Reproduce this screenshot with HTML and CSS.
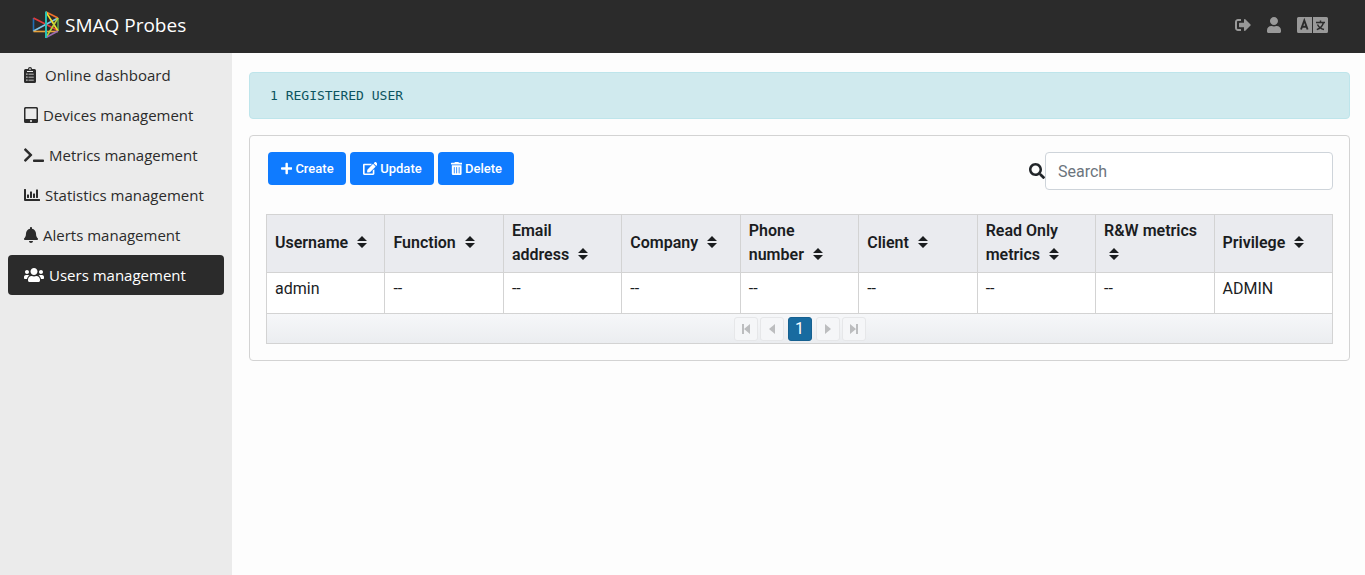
FILE: index.html
```html
<!DOCTYPE html>
<html lang="en">
<head>
<meta charset="utf-8">
<title>SMAQ Probes - Users management</title>
<link rel="stylesheet" href="styles.css">
</head>
<body>
<header class="topbar">
  <a class="brand" href="#">
    <svg class="logo" viewBox="0 0 28 28" fill="none" stroke-width="1.6" aria-hidden="true">
      <path d="M1.500 7V20.500" stroke="#1f6fb5"/>
      <path d="M1.500 7L26 19.500" stroke="#e23b3b"/>
      <path d="M1.500 20L26 7" stroke="#7cc4ea"/>
      <path d="M1.500 20.500H26" stroke="#e9a23b"/>
      <path d="M26 7V20" stroke="#5da548"/>
      <path d="M14 1L26 7" stroke="#f0702a"/>
      <path d="M14 1L26 20" stroke="#f2df2e"/>
      <path d="M14 26.500L26 7" stroke="#b9cf3a"/>
      <path d="M14 26.500L26 20" stroke="#9a6bb0"/>
      <path d="M14 .5V27" stroke="#27c0b4" stroke-width="2"/>
    </svg>
    <span>SMAQ Probes</span>
  </a>
  <nav class="tools" aria-label="Account">
    <button class="tool" aria-label="Log out"><svg class="ico" viewBox="0 0 512 512"><path d="M497 273L329 441c-15 15-41 4.500-41-17v-96H152c-13.300 0-24-10.700-24-24v-96c0-13.300 10.700-24 24-24h136V88c0-21.400 25.900-32 41-17l168 168c9.300 9.400 9.300 24.600 0 34zM192 436v-40c0-6.600-5.400-12-12-12H96c-17.700 0-32-14.300-32-32V160c0-17.700 14.300-32 32-32h84c6.600 0 12-5.400 12-12V76c0-6.600-5.400-12-12-12H96c-53 0-96 43-96 96v192c0 53 43 96 96 96h84c6.600 0 12-5.400 12-12z"/></svg></button>
    <button class="tool" aria-label="Profile"><svg class="ico" viewBox="0 0 448 512"><path d="M224 256c70.700 0 128-57.300 128-128S294.700 0 224 0 96 57.300 96 128s57.300 128 128 128zm89.600 32h-16.700c-22.200 10.200-46.900 16-72.900 16s-50.600-5.800-72.900-16h-16.700C60.200 288 0 348.200 0 422.400V464c0 26.500 21.500 48 48 48h352c26.500 0 48-21.500 48-48v-41.600c0-74.200-60.200-134.400-134.400-134.400z"/></svg></button>
    <button class="tool" aria-label="Language"><svg class="lang" viewBox="0 0 31 16" fill="none"><path d="M1.500 0H15V16H1.500Q0 16 0 14.500V1.500Q0 0 1.500 0zM16 0H29.500Q31 0 31 1.500V14.500Q31 16 29.500 16H16z" fill="#999"/><path d="M4 12.500L7.300 3.500L10.600 12.500M5.200 9.800H9.400" stroke="#2b2b2b" stroke-width="1.900"/><path d="M19 5.500H28M23.500 3.500V5.500M26.500 5.500Q25 11 19.800 12.600M20.500 7.500Q22.500 11.500 27 12.600" stroke="#2b2b2b" stroke-width="1.500"/></svg></button>
  </nav>
</header>
<div class="shell">
  <nav class="sidebar" aria-label="Main">
    <a class="item" href="#"><svg class="ico wide-gap" viewBox="0 0 384 512"><path fill-rule="evenodd" d="M48 64h80a64 64 0 0 1 128 0h80a48 48 0 0 1 48 48v352a48 48 0 0 1-48 48H48a48 48 0 0 1-48-48V112a48 48 0 0 1 48-48zM192 40a24 24 0 1 0 .1 0zM96 128v32h192v-32zM72 208v40h40v-40zm72 8v24h168v-24zM72 304v40h40v-40zm72 8v24h168v-24zM72 400v40h40v-40zm72 8v24h168v-24z"/></svg><span>Online dashboard</span></a>
    <a class="item" href="#"><svg class="ico" viewBox="0 0 448 512"><path fill-rule="evenodd" d="M48 0h352a48 48 0 0 1 48 48v416a48 48 0 0 1-48 48H48a48 48 0 0 1-48-48V48A48 48 0 0 1 48 0zM60 48a12 12 0 0 0-12 12v312a12 12 0 0 0 12 12h328a12 12 0 0 0 12-12V60a12 12 0 0 0-12-12zM224 416a32 32 0 1 0 .1 0z"/></svg><span>Devices management</span></a>
    <a class="item" href="#"><svg class="ico" viewBox="0 0 640 512"><path d="M257.900 273L64 467c-9 9-25 9-34 0L7 444c-9-9-9-24 0-34l154-154L7 102c-9-10-9-25 0-34l23-23c9-9 25-9 34 0l194 194c9 9 9 25 0 34zM640 424v32c0 13-11 24-24 24H312c-13 0-24-11-24-24v-32c0-13 11-24 24-24h304c13 0 24 11 24 24z"/></svg><span>Metrics management</span></a>
    <a class="item" href="#"><svg class="ico" viewBox="0 0 512 512"><path d="M0 80a16 16 0 0 1 16-16h32a16 16 0 0 1 16 16v304h432a16 16 0 0 1 16 16v32a16 16 0 0 1-16 16H32a32 32 0 0 1-32-32zM109 237h38a13 13 0 0 1 13 13v89a13 13 0 0 1-13 13h-38a13 13 0 0 1-13-13v-89a13 13 0 0 1 13-13zM205 141h38a13 13 0 0 1 13 13v185a13 13 0 0 1-13 13h-38a13 13 0 0 1-13-13V154a13 13 0 0 1 13-13zM301 205h38a13 13 0 0 1 13 13v121a13 13 0 0 1-13 13h-38a13 13 0 0 1-13-13V218a13 13 0 0 1 13-13zM397 77h38a13 13 0 0 1 13 13v249a13 13 0 0 1-13 13h-38a13 13 0 0 1-13-13V90a13 13 0 0 1 13-13z"/></svg><span>Statistics management</span></a>
    <a class="item" href="#"><svg class="ico" viewBox="0 0 448 512"><path d="M224 512c35.320 0 63.970-28.650 63.970-64H160.030c0 35.350 28.650 64 63.970 64zm215.390-149.710c-19.320-20.760-55.470-51.990-55.470-154.290 0-77.700-54.480-139.900-127.940-155.160V32c0-17.670-14.320-32-31.980-32s-31.980 14.330-31.980 32v20.840C118.560 68.100 64.080 130.300 64.080 208c0 102.300-36.150 133.530-55.470 154.290-6 6.450-8.660 14.160-8.610 21.710.11 16.400 12.980 32 32.100 32h383.800c19.120 0 32-15.600 32.100-32 .05-7.550-2.610-15.270-8.610-21.710z"/></svg><span>Alerts management</span></a>
    <a class="item active" href="#" aria-current="page"><svg class="ico" viewBox="0 0 640 512"><path d="M96 224c35.300 0 64-28.700 64-64s-28.700-64-64-64-64 28.700-64 64 28.700 64 64 64zm448 0c35.300 0 64-28.700 64-64s-28.700-64-64-64-64 28.700-64 64 28.700 64 64 64zm32 32h-64c-17.600 0-33.500 7.100-45.100 18.600 40.300 22.100 68.900 62 75.100 109.400h66c17.700 0 32-14.300 32-32v-32c0-35.300-28.700-64-64-64zm-256 0c61.900 0 112-50.100 112-112S381.900 32 320 32 208 82.100 208 144s50.100 112 112 112zm76.800 32h-8.300c-20.800 10-43.900 16-68.500 16s-47.600-6-68.500-16h-8.300C179.600 288 128 339.600 128 403.200V432c0 26.500 21.500 48 48 48h288c26.500 0 48-21.500 48-48v-28.800c0-63.600-51.600-115.200-115.200-115.200zm-223.700-13.400C161.500 263.100 145.600 256 128 256H64c-35.300 0-64 28.700-64 64v32c0 17.700 14.300 32 32 32h65.900c6.300-47.400 34.900-87.300 75.200-109.400z"/></svg><span>Users management</span></a>
  </nav>
  <main class="content">
    <div class="notice" role="status">1 REGISTERED USER</div>
    <section class="card">
      <div class="actions">
        <div class="buttons">
          <button class="btn"><svg class="ico" viewBox="0 0 448 512"><path d="M416 208H272V64c0-17.670-14.330-32-32-32h-32c-17.670 0-32 14.330-32 32v144H32c-17.670 0-32 14.330-32 32v32c0 17.670 14.330 32 32 32h144v144c0 17.670 14.330 32 32 32h32c17.670 0 32-14.330 32-32V304h144c17.670 0 32-14.330 32-32v-32c0-17.670-14.330-32-32-32z"/></svg>Create</button>
          <button class="btn"><svg class="ico" viewBox="0 0 576 512"><path d="M402.600 83.200l90.200 90.200c3.800 3.800 3.800 10 0 13.800L274.400 405.600l-92.800 10.300c-12.400 1.400-22.900-9.100-21.500-21.500l10.300-92.800L388.800 83.200c3.800-3.800 10-3.800 13.800 0zm162-22.900l-48.800-48.800c-15.200-15.200-39.900-15.200-55.200 0l-35.400 35.400c-3.800 3.800-3.800 10 0 13.800l90.200 90.200c3.800 3.800 10 3.800 13.800 0l35.400-35.400c15.200-15.300 15.200-40 0-55.200zM384 346.200V448H64V128h229.800c3.200 0 6.200-1.300 8.500-3.500l40-40c7.600-7.600 2.200-20.500-8.500-20.500H48C21.500 64 0 85.500 0 112v352c0 26.500 21.500 48 48 48h352c26.500 0 48-21.500 48-48V306.200c0-10.700-12.900-16-20.500-8.500l-40 40c-2.200 2.300-3.500 5.300-3.500 8.500z"/></svg>Update</button>
          <button class="btn"><svg class="ico" viewBox="0 0 448 512"><path fill-rule="evenodd" d="M16 32h120l9-19A24 24 0 0 1 167 0h114a24 24 0 0 1 22 13l9 19h120a16 16 0 0 1 16 16v32a16 16 0 0 1-16 16H16A16 16 0 0 1 0 80V48a16 16 0 0 1 16-16zM32 128h384v336a48 48 0 0 1-48 48H80a48 48 0 0 1-48-48zM128 192a16 16 0 0 0-16 16v224a16 16 0 0 0 32 0V208a16 16 0 0 0-16-16zm96 0a16 16 0 0 0-16 16v224a16 16 0 0 0 32 0V208a16 16 0 0 0-16-16zm96 0a16 16 0 0 0-16 16v224a16 16 0 0 0 32 0V208a16 16 0 0 0-16-16z"/></svg>Delete</button>
        </div>
        <div class="search">
          <label for="search" aria-label="Search"><svg class="ico" viewBox="0 0 512 512"><path d="M505 442.700L405.300 343c-4.500-4.500-10.600-7-17-7H372c27.600-35.300 44-79.700 44-128C416 93.100 322.900 0 208 0S0 93.100 0 208s93.100 208 208 208c48.300 0 92.700-16.400 128-44v16.300c0 6.400 2.500 12.500 7 17l99.700 99.700c9.400 9.400 24.600 9.400 33.900 0l28.300-28.300c9.400-9.400 9.400-24.600.1-34zM208 336c-70.700 0-128-57.200-128-128 0-70.700 57.200-128 128-128 70.700 0 128 57.200 128 128 0 70.700-57.200 128-128 128z"/></svg></label>
          <input id="search" class="field" type="text" placeholder="Search">
        </div>
      </div>
      <table class="grid">
        <thead>
          <tr>
            <th>Username <svg class="sort" viewBox="0 0 10 12"><path d="M5 0L10 5H0zM0 7H10L5 12z"/></svg></th>
            <th>Function <svg class="sort" viewBox="0 0 10 12"><path d="M5 0L10 5H0zM0 7H10L5 12z"/></svg></th>
            <th>Email address <svg class="sort" viewBox="0 0 10 12"><path d="M5 0L10 5H0zM0 7H10L5 12z"/></svg></th>
            <th>Company <svg class="sort" viewBox="0 0 10 12"><path d="M5 0L10 5H0zM0 7H10L5 12z"/></svg></th>
            <th>Phone number <svg class="sort" viewBox="0 0 10 12"><path d="M5 0L10 5H0zM0 7H10L5 12z"/></svg></th>
            <th>Client <svg class="sort" viewBox="0 0 10 12"><path d="M5 0L10 5H0zM0 7H10L5 12z"/></svg></th>
            <th>Read Only metrics <svg class="sort" viewBox="0 0 10 12"><path d="M5 0L10 5H0zM0 7H10L5 12z"/></svg></th>
            <th>R&amp;W metrics <svg class="sort" viewBox="0 0 10 12"><path d="M5 0L10 5H0zM0 7H10L5 12z"/></svg></th>
            <th>Privilege <svg class="sort" viewBox="0 0 10 12"><path d="M5 0L10 5H0zM0 7H10L5 12z"/></svg></th>
          </tr>
        </thead>
        <tbody>
          <tr><td>admin</td><td>--</td><td>--</td><td>--</td><td>--</td><td>--</td><td>--</td><td>--</td><td>ADMIN</td></tr>
        </tbody>
      </table>
      <nav class="pager" aria-label="Pages">
        <button class="page" disabled aria-label="First page"><svg viewBox="0 0 10 10"><path d="M1 0H3V10H1zM9 0V10L3 5z"/></svg></button>
        <button class="page" disabled aria-label="Previous page"><svg viewBox="0 0 10 10"><path d="M8 0V10L2 5z"/></svg></button>
        <button class="page current" aria-current="page">1</button>
        <button class="page" disabled aria-label="Next page"><svg viewBox="0 0 10 10"><path d="M2 0V10L8 5z"/></svg></button>
        <button class="page" disabled aria-label="Last page"><svg viewBox="0 0 10 10"><path d="M7 0H9V10H7zM1 0V10L7 5z"/></svg></button>
      </nav>
    </section>
  </main>
</div>
</body>
</html>
```
FILE: styles.css
```css
* { box-sizing: border-box; }

body {
  margin: 0;
  min-height: 100vh;
  display: flex;
  flex-direction: column;
  background: #fdfdfd;
  color: #212529;
  font: 16px/24px Roboto, sans-serif;
}

button { font-family: inherit; cursor: pointer; }

svg { fill: currentColor; }

.ico { height: 16px; flex: none; }

.topbar {
  display: flex;
  align-items: center;
  justify-content: space-between;
  height: 53px;
  padding: 0 37px 3px 32px;
  background: #2b2b2b;
}

.brand {
  display: flex;
  align-items: center;
  gap: 5px;
  color: #fff;
  font: 19px/28px "Open Sans", sans-serif;
  text-decoration: none;
}

.logo { width: 28px; height: 28px; fill: none; }

.tools { display: flex; align-items: center; gap: 16px; }

.tool {
  display: flex;
  padding: 0;
  border: 0;
  background: none;
  color: #999;
}

.lang { width: 31px; height: 16px; }

.shell { display: flex; flex: 1; }

.sidebar {
  flex: 0 0 232px;
  padding: 2px 8px;
  background: #ebebeb;
}

.item {
  display: flex;
  align-items: center;
  gap: 5px;
  height: 40px;
  padding: 0 16px;
  border-radius: 4px;
  color: #2b2b2b;
  font: 15px/24px "Open Sans", sans-serif;
  text-decoration: none;
}

.item.active { background: #2b2b2b; color: #fff; }

.wide-gap { margin-right: 4px; }

.content { flex: 1; min-width: 0; padding: 19px 15px 16px 17px; }

.notice {
  margin-bottom: 16px;
  padding: 11px 20px;
  border: 1px solid #bee5eb;
  border-radius: 4px;
  background: #d0eaee;
  color: #0c5460;
  font: 13px/23px "DejaVu Sans Mono", monospace;
}

.card {
  padding: 16px;
  border: 1px solid #d3d3d3;
  border-radius: 4px;
}

.actions {
  display: flex;
  justify-content: space-between;
  align-items: flex-start;
  margin-bottom: 24px;
}

.buttons { display: flex; gap: 4px; padding-left: 2px; }

.btn {
  display: flex;
  align-items: center;
  gap: 3px;
  height: 33px;
  padding: 0 12px 0 13px;
  border: 0;
  border-radius: 4px;
  background: #0f7bff;
  color: #fff;
  font-size: 13px;
  font-weight: 500;
}

.btn .ico { height: 13px; }

.search { display: flex; align-items: center; }

.search label { display: flex; }

.field {
  width: 288px;
  height: 38px;
  padding: 0 12px;
  border: 1px solid #ced4da;
  border-radius: 4px;
  background: #fff;
  color: #495057;
  font: inherit;
}

.field::placeholder { color: #6c757d; opacity: 1; }

.grid {
  width: 100%;
  table-layout: fixed;
  border-collapse: collapse;
  color: #1b1d1f;
}

.grid th,
.grid td {
  border: 1px solid #d3d3d3;
  text-align: left;
}

.grid th {
  height: 58px;
  padding: 3px 12px 5px 8px;
  background: #eaebef;
  font-weight: 600;
}

.grid td {
  height: 41px;
  padding: 4px 8px;
  vertical-align: top;
  background: #fff;
}

.sort { width: 10px; height: 12px; margin-left: 5px; }

.pager {
  display: flex;
  align-items: center;
  justify-content: center;
  gap: 2px;
  height: 30px;
  border: 1px solid #d3d3d3;
  border-top: 0;
  background: linear-gradient(#f6f7f9, #ebedf0);
}

.page {
  display: flex;
  align-items: center;
  justify-content: center;
  width: 24px;
  height: 24px;
  padding: 0;
  border: 1px solid #e6e7e9;
  border-radius: 3px;
  background: #f5f6f8;
  color: #bcbdbf;
  font-size: 16px;
}

.page svg { width: 10px; height: 10px; }

.page.current {
  margin: 0 2px;
  border-color: #156090;
  background: #186ba0;
  color: #fff;
}
```
